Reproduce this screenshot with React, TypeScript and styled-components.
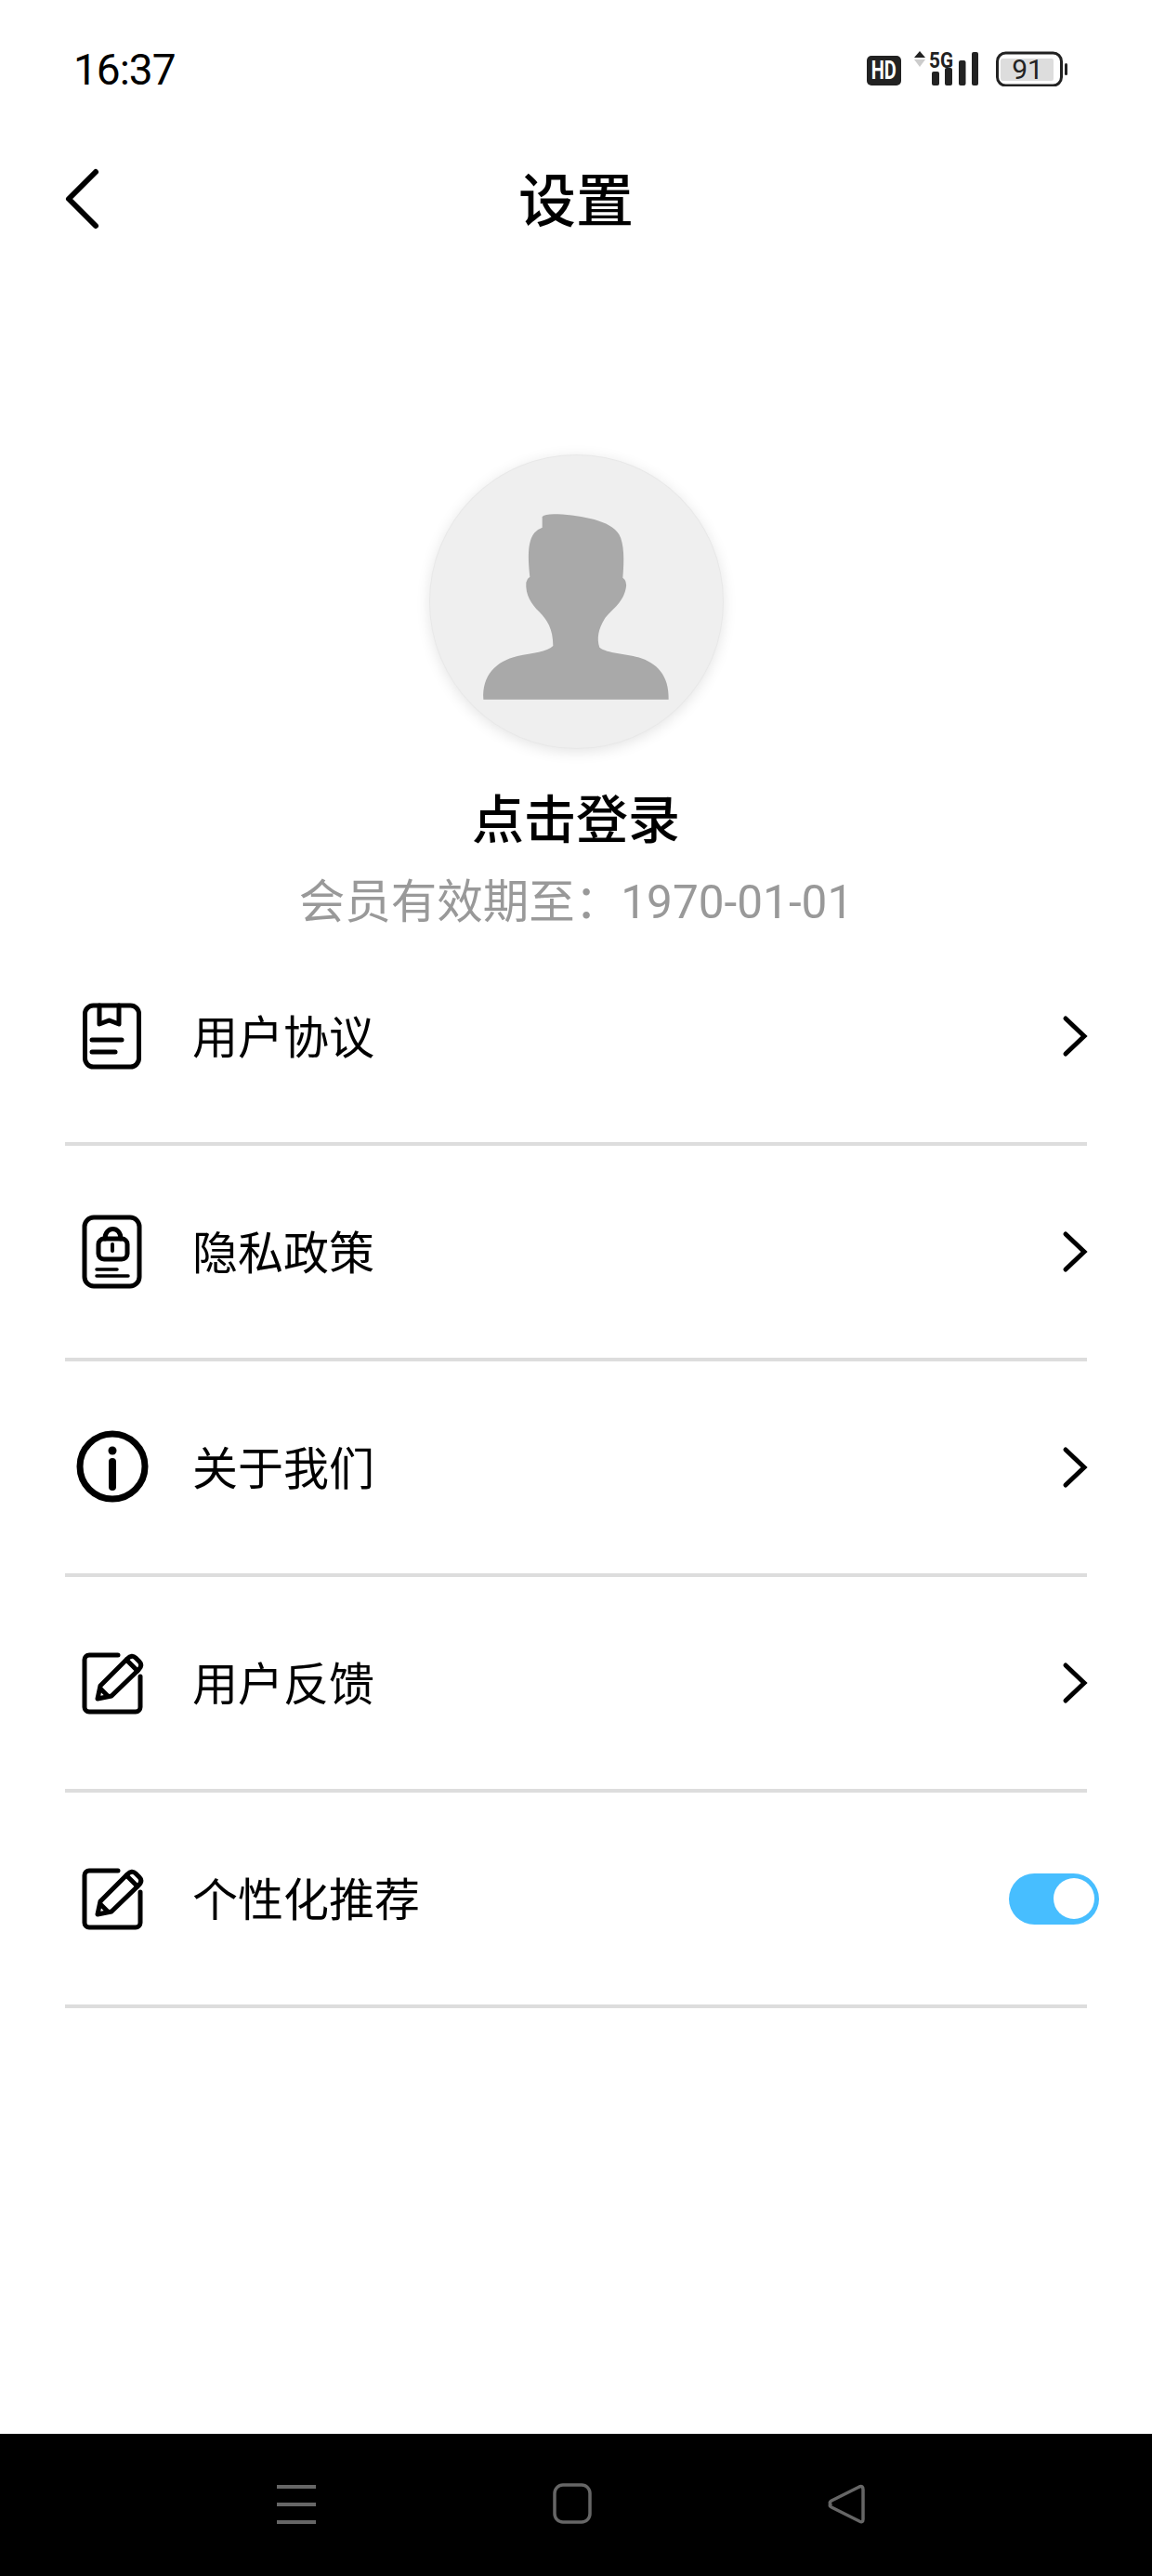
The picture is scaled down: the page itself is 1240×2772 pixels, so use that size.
import React from 'react';
import styled, { createGlobalStyle } from 'styled-components';

const GlobalStyle = createGlobalStyle`
  html, body {
    margin: 0;
    padding: 0;
    background: #fff;
  }
  body {
    font-family: Roboto, "Noto Sans CJK SC", sans-serif;
    color: #000;
  }
`;

const Page = styled.div`
  width: 1240px;
  height: 2772px;
  display: flex;
  flex-direction: column;
  background: #fff;
  overflow: hidden;
`;

const StatusBar = styled.div`
  height: 150px;
  flex: none;
  display: flex;
  align-items: center;
  justify-content: space-between;
  padding: 0 90px 0 79px;
`;

const Time = styled.span`
  font-size: 46px;
  letter-spacing: -1px;
`;

const StatusIcons = styled.div`
  display: flex;
  align-items: flex-end;
  gap: 14px;
  position: relative;
  top: -6px;
`;

const Hd = styled.div`
  width: 37px;
  height: 32px;
  border-radius: 5px;
  background: #222;
  color: #fff;
  display: flex;
  align-items: center;
  justify-content: center;
  font-size: 27px;
  font-weight: 700;
  line-height: 32px;
  margin-bottom: 1px;
`;

const HdText = styled.span`
  display: inline-block;
  transform: scaleX(0.74);
`;

const Header = styled.div`
  height: 136px;
  flex: none;
  position: relative;
  display: flex;
  align-items: center;
  justify-content: center;
`;

const BackIcon = styled.svg`
  position: absolute;
  left: 64px;
  top: 28px;
`;

const Title = styled.h1`
  margin: 0;
  font-size: 62px;
  font-weight: 500;
  line-height: 80px;
`;

const Profile = styled.div`
  flex: none;
  margin-top: 204px;
  display: flex;
  flex-direction: column;
  align-items: center;
`;

const Avatar = styled.div`
  width: 315px;
  height: 315px;
  border-radius: 50%;
  background: #efefef;
  box-shadow: 0 0 0 1px #e8e8e8, 0 3px 16px rgba(0, 0, 0, 0.12);
`;

const Name = styled.div`
  margin-top: 38px;
  font-size: 56px;
  font-weight: 500;
  line-height: 80px;
`;

const Expiry = styled.div`
  margin-top: 18px;
  font-size: 49.5px;
  line-height: 60px;
  color: #999;
`;

const List = styled.div`
  flex: none;
`;

const Row = styled.div`
  height: 228px;
  display: flex;
  align-items: center;
  gap: 27px;
  padding: 0 57px 0 60px;
`;

const RowLabel = styled.span`
  flex: 1;
  font-size: 49px;
  line-height: 64px;
  position: relative;
  top: 3px;
`;

const Divider = styled.div`
  height: 4px;
  margin: 0 70px;
  background: #ddd;
`;

const Chevron = styled.svg`
  margin-right: 11px;
`;

const Toggle = styled.div`
  width: 97px;
  height: 55px;
  box-sizing: border-box;
  padding: 5.5px;
  border-radius: 28px;
  background: #47beff;
  display: flex;
  justify-content: flex-end;
`;

const Knob = styled.div`
  width: 44px;
  height: 44px;
  border-radius: 50%;
  background: #fff;
`;

const NavBar = styled.div`
  margin-top: auto;
  height: 153px;
  flex: none;
  background: #000;
  position: relative;
`;

const NavIcon = styled.svg<{ $left: number }>`
  position: absolute;
  top: 50px;
  left: ${(p) => p.$left}px;
`;

const Signal = () => (
  <svg width="69" height="48" viewBox="984 45 69 48">
    <path d="M984 62 L990 55 L996 62 Z" fill="#222" />
    <path d="M984 64 L990 72 L996 64 Z" fill="#ccc" />
    <text x="1013" y="73" textAnchor="middle" fontFamily="Roboto, sans-serif" fontSize="24" fontWeight="700" fill="#222" textLength="26" lengthAdjust="spacingAndGlyphs">
      5G
    </text>
    <rect x="1003" y="77" width="8" height="15" rx="2" fill="#222" />
    <rect x="1017" y="73" width="8" height="19" rx="2" fill="#222" />
    <rect x="1032" y="65" width="7.5" height="27" rx="2" fill="#222" />
    <rect x="1046" y="56" width="7" height="36" rx="2" fill="#222" />
  </svg>
);

const Battery = () => (
  <svg width="78" height="48" viewBox="1072 45 78 48" style={{ marginLeft: 5 }}>
    <rect x="1073.5" y="57" width="69" height="35" rx="9" fill="none" stroke="#222" strokeWidth="3" />
    <rect x="1077" y="63" width="57" height="24" rx="2" fill="#ddd" />
    <rect x="1146" y="68" width="3" height="13" rx="1.5" fill="#222" />
    <text x="1106" y="85" textAnchor="middle" fontFamily="Roboto, sans-serif" fontSize="30" fill="#222">
      91
    </text>
  </svg>
);

const IconBox = ({ children }: { children: React.ReactNode }) => (
  <svg width="120" height="120" viewBox="0 0 120 120" fill="none" stroke="#000" strokeWidth="5" strokeLinecap="round" strokeLinejoin="round" style={{ flex: 'none' }}>
    {children}
  </svg>
);

const AgreementIcon = () => (
  <IconBox>
    <rect x="31.5" y="27" width="58" height="66" rx="9" />
    <path d="M47 27 V47 L57.5 43 L68 47 V27" />
    <path d="M39 64 H71" />
    <path d="M39 77 H64" />
  </IconBox>
);

const PrivacyIcon = () => (
  <IconBox>
    <rect x="31" y="23" width="59" height="74" rx="10" />
    <rect x="46" y="46" width="31" height="22" rx="6" />
    <path d="M53 46 C53 32 70 32 70 46" />
    <path d="M61 52 V59" strokeWidth="4" />
    <path d="M44 79 H66" strokeWidth="3.5" />
    <path d="M44 86 H78" strokeWidth="3.5" />
  </IconBox>
);

const InfoIcon = () => (
  <IconBox>
    <circle cx="61" cy="59" r="35" strokeWidth="7" />
    <path d="M61 54 V81" strokeWidth="8" />
    <circle cx="61" cy="42" r="4.5" fill="#000" stroke="none" />
  </IconBox>
);

const EditIcon = () => (
  <IconBox>
    <path d="M67 30 H36 a5 5 0 0 0 -5 5 V86 a5 5 0 0 0 5 5 H86 a5 5 0 0 0 5 -5 V53" />
    <path d="M45 77 L48 63 L77 34 Q82 29 86 33 L90 37 Q94 41 89 46 L60 74 Z" />
    <path d="M76 35 L88 47" />
    <path d="M48 66 L56 74" />
  </IconBox>
);

const RowChevron = () => (
  <Chevron width="34" height="48" viewBox="0 0 34 48" fill="none" stroke="#000" strokeWidth="5" strokeLinecap="round" strokeLinejoin="miter">
    <path d="M9 5 L29 24 L9 43" />
  </Chevron>
);

const rows = [
  { label: '用户协议', icon: <AgreementIcon /> },
  { label: '隐私政策', icon: <PrivacyIcon /> },
  { label: '关于我们', icon: <InfoIcon /> },
  { label: '用户反馈', icon: <EditIcon /> },
  { label: '个性化推荐', icon: <EditIcon />, toggle: true },
];

export default function App() {
  return (
    <Page>
      <GlobalStyle />
      <StatusBar>
        <Time>16:37</Time>
        <StatusIcons>
          <Hd>
            <HdText>HD</HdText>
          </Hd>
          <Signal />
          <Battery />
        </StatusIcons>
      </StatusBar>

      <Header>
        <BackIcon width="44" height="72" viewBox="0 0 44 72" fill="none" stroke="#000" strokeWidth="6" strokeLinecap="round" strokeLinejoin="round">
          <path d="M39 7 L10 36 L39 65" />
        </BackIcon>
        <Title>设置</Title>
      </Header>

      <Profile>
        <Avatar>
          <svg width="315" height="315" viewBox="68 60 945 945">
            <path
              d="M430 258 Q440 248 480 250 C560 255 650 270 678 315 C695 345 695 400 690 455 Q705 465 700 490 C690 540 650 560 630 590 C612 620 605 650 615 680 C640 700 700 700 740 712 C800 730 840 770 838 848 L240 848 C235 770 280 725 350 708 C400 698 445 695 465 675 C465 620 445 590 420 565 C395 540 375 510 378 470 Q380 458 390 452 C385 400 380 340 405 310 Q415 298 430 293 Z"
              fill="#a9a9a9"
            />
          </svg>
        </Avatar>
        <Name>点击登录</Name>
        <Expiry>会员有效期至：1970-01-01</Expiry>
      </Profile>

      <List>
        {rows.map((row) => (
          <React.Fragment key={row.label}>
            <Row>
              {row.icon}
              <RowLabel>{row.label}</RowLabel>
              {row.toggle ? (
                <Toggle>
                  <Knob />
                </Toggle>
              ) : (
                <RowChevron />
              )}
            </Row>
            <Divider />
          </React.Fragment>
        ))}
      </List>

      <NavBar>
        <NavIcon $left={298} width="42" height="52" viewBox="0 0 42 52" stroke="#666" strokeWidth="4">
          <path d="M0 7 H42 M0 26 H42 M0 45 H42" />
        </NavIcon>
        <NavIcon $left={595} width="42" height="52" viewBox="0 0 42 52" fill="none" stroke="#666" strokeWidth="3.5">
          <rect x="2" y="5" width="38" height="40" rx="9" />
        </NavIcon>
        <NavIcon $left={889} width="44" height="52" viewBox="0 0 44 52" fill="none" stroke="#666" strokeWidth="3.5" strokeLinejoin="round">
          <path d="M5 26 Q3 24 6 22 L36 7 Q40 5.5 40 10 V42 Q40 46 36 44 L6 29 Q3 27.5 5 26 Z" />
        </NavIcon>
      </NavBar>
    </Page>
  );
}
